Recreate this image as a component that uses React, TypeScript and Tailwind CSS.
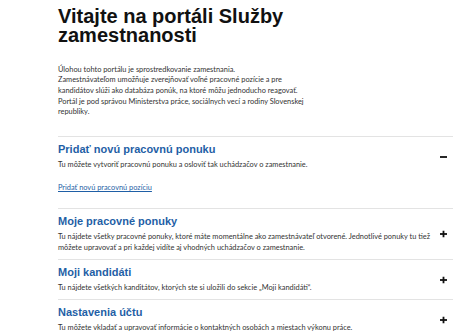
import React from "react";

const body = "font-['Lato','Noto_Sans',sans-serif] text-[7.4px]";
const head = "font-['Liberation_Sans','Arial',sans-serif]";

function Plus() {
  return (
    <svg width="7" height="7" viewBox="0 0 7 7">
      <rect x="2.6" y="0" width="1.8" height="7" fill="#111" />
      <rect x="0" y="2.6" width="7" height="1.8" fill="#111" />
    </svg>
  );
}

function Minus() {
  return (
    <svg width="7" height="7" viewBox="0 0 7 7">
      <rect x="0" y="2.6" width="7" height="1.8" fill="#111" />
    </svg>
  );
}

function Section({
  title,
  desc,
  open,
  children,
}: {
  title: string;
  desc: string;
  open?: boolean;
  children?: React.ReactNode;
}) {
  return (
    <section className="border-t border-[#e3e3e3]">
      <div className="relative pt-[5.5px] pb-[6.5px]">
        <h2 className={`${head} text-[11px] leading-[13px] font-bold text-[#1f5fa6]`}>{title}</h2>
        <p className={`${body} mt-[3px] pr-[14px] leading-[11px] text-[#333]`}>{desc}</p>
        <span className="absolute right-[6px] top-1/2 -translate-y-1/2 flex">
          {open ? <Minus /> : <Plus />}
        </span>
      </div>
      {open && <div className={`${body} leading-[11px] pt-[6px] pb-[15px]`}>{children}</div>}
    </section>
  );
}

export default function App() {
  return (
    <div className="w-[474px] h-[333px] overflow-hidden bg-white pl-[58px] pr-[21px] pt-[6.5px]">
      <h1 className={`${head} max-w-[260px] text-[20px] leading-[19px] font-bold text-[#111]`}>
        Vitajte na portáli Služby zamestnanosti
      </h1>
      <p className={`${body} mt-[20px] max-w-[252px] leading-[10.7px] text-[#333]`}>
        Úlohou tohto portálu je sprostredkovanie zamestnania.
        <br />
        Zamestnávateľom umožňuje zverejňovať voľné pracovné pozície a pre kandidátov slúži ako databáza ponúk, na ktoré môžu jednoducho reagovať. Portál je pod správou Ministerstva práce, sociálnych vecí a rodiny Slovenskej republiky.
      </p>
      <div className="mt-[18px]">
        <Section
          open
          title="Pridať novú pracovnú ponuku"
          desc="Tu môžete vytvoriť pracovnú ponuku a osloviť tak uchádzačov o zamestnanie."
        >
          <a href="#" className="block text-[#1f5fa6] underline">
            Pridať novú pracovnú pozíciu
          </a>
        </Section>
        <Section
          title="Moje pracovné ponuky"
          desc="Tu nájdete všetky pracovné ponuky, ktoré máte momentálne ako zamestnávateľ otvorené. Jednotlivé ponuky tu tiež môžete upravovať a pri každej vidíte aj vhodných uchádzačov o zamestnanie."
        />
        <Section
          title="Moji kandidáti"
          desc="Tu nájdete všetkých kanditátov, ktorých ste si uložili do sekcie „Moji kandidáti“."
        />
        <Section
          title="Nastavenia účtu"
          desc="Tu môžete vkladať a upravovať informácie o kontaktných osobách a miestach výkonu práce."
        />
      </div>
    </div>
  );
}
